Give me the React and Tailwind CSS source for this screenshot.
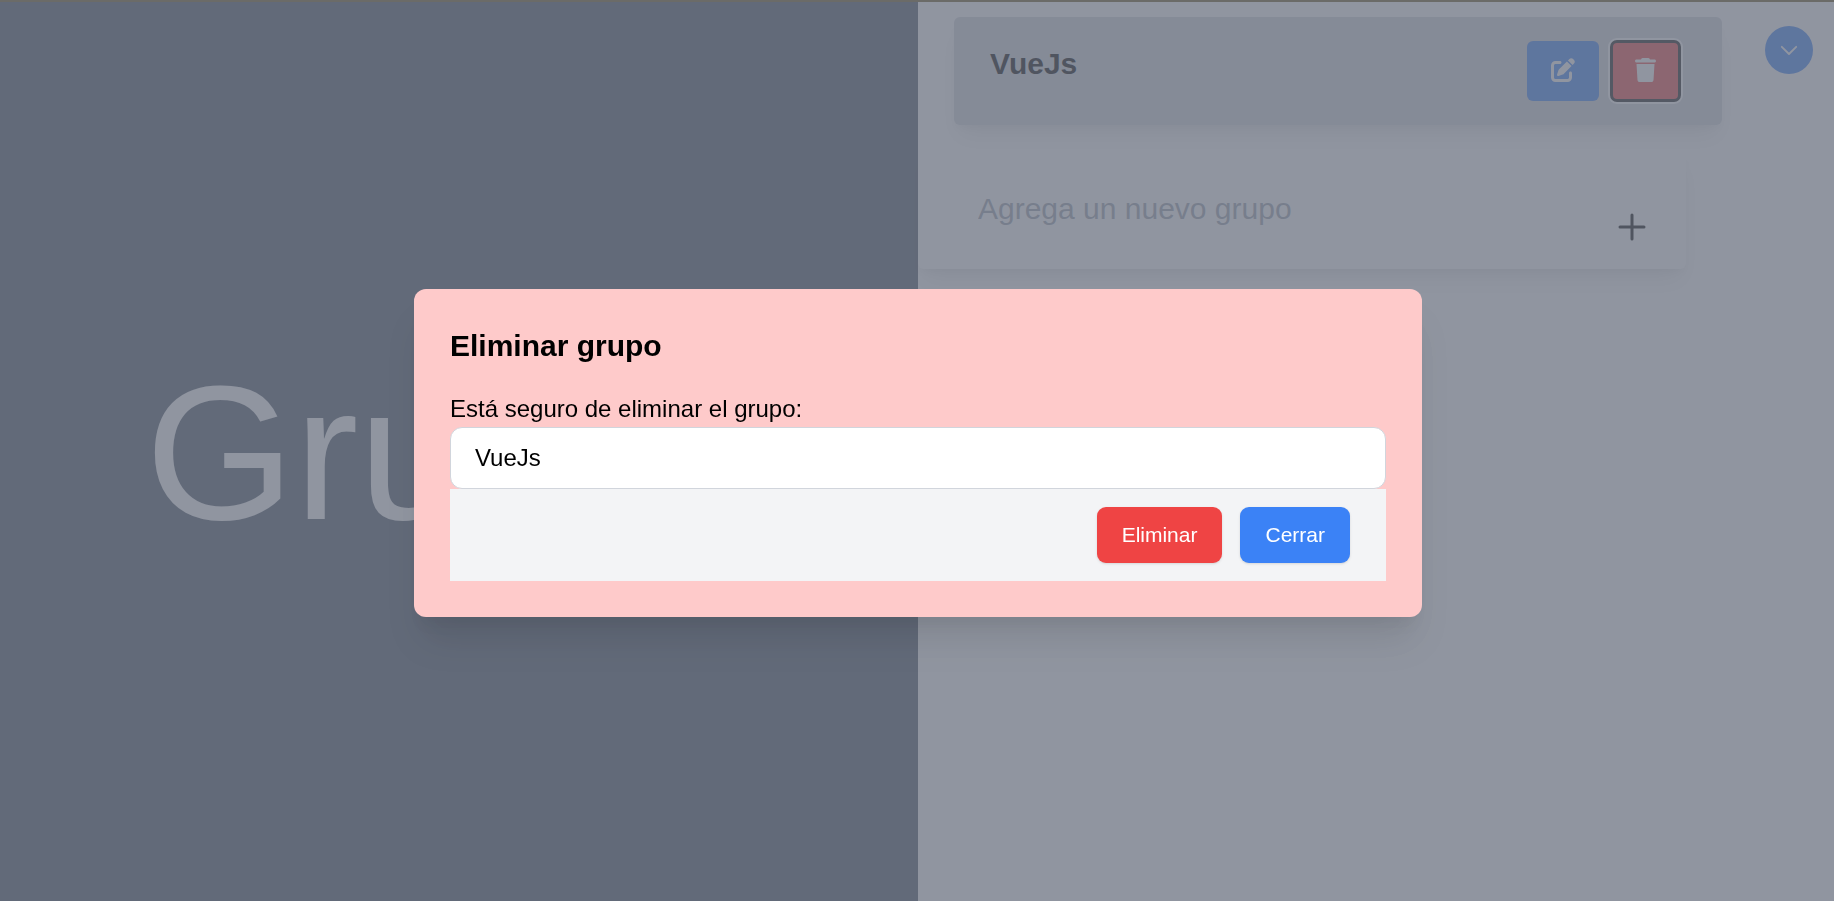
import { FaPenToSquare, FaTrash } from "react-icons/fa6";

function Plus() {
  return (
    <svg viewBox="0 0 36 36" className="size-9" fill="none" stroke="currentColor" strokeWidth="3" strokeLinecap="round" aria-hidden="true">
      <path d="M18 6v24M6 18h24" />
    </svg>
  );
}

function ChevronDown() {
  return (
    <svg viewBox="0 0 24 24" className="size-6" fill="none" stroke="currentColor" strokeWidth="1.8" strokeLinecap="round" strokeLinejoin="round" aria-hidden="true">
      <path d="M4.8 8.8l7.2 7.2 7.2-7.2" />
    </svg>
  );
}

function GroupsPage() {
  return (
    <div className="flex min-h-screen border-t-2 border-[#6b6b68] bg-gray-600 pl-0.5">
      <section className="flex w-1/2 items-center justify-center pt-0.5">
        <h1 className="text-[192px] leading-none text-white">Grupos</h1>
      </section>
      <main className="flex w-1/2 items-start justify-between bg-white">
        <div className="mr-[43px] flex-1">
          <article className="mt-[15px] ml-9 flex justify-between rounded-md bg-[#d1d5db] py-6 pr-[42px] pl-9 shadow-[0_15px_23px_-5px_rgb(0_0_0/0.1),0_6px_9px_-3px_rgb(0_0_0/0.05)]">
            <h2 className="text-[30px] leading-[46px] font-bold">VueJs</h2>
            <div className="flex gap-3">
              <button type="button" aria-label="Editar" className="flex h-[60px] items-center justify-center rounded-md bg-[#3b82f6] px-6 pb-0.5 text-white">
                <FaPenToSquare className="size-6" />
              </button>
              <button type="button" aria-label="Borrar" className="flex h-[60px] items-center justify-center rounded-md bg-[#ef4444] px-6 pb-0.5 text-white shadow-[0_0_0_3px_white] outline-3 -outline-offset-2 outline-[#101010]">
                <FaTrash className="h-6 w-[21px]" />
              </button>
            </div>
          </article>
          <form className="mt-6 mr-9 flex rounded-md bg-white px-9 shadow-[0_15px_23px_-5px_rgb(0_0_0/0.1),0_6px_9px_-3px_rgb(0_0_0/0.05)]">
            <input aria-label="Nuevo grupo" placeholder="Agrega un nuevo grupo" className="mt-[30px] mb-[30px] h-[60px] flex-1 px-6 text-[30px] placeholder:text-[#9ca3af]" />
            <button type="button" aria-label="Agregar" className="mt-[60px] size-9"><Plus /></button>
          </form>
        </div>
        <button type="button" aria-label="Opciones" className="mt-6 mr-[21px] flex size-12 items-center justify-center rounded-full bg-[#3b82f6] text-white">
          <ChevronDown />
        </button>
      </main>
    </div>
  );
}

function DeleteDialog() {
  return (
    <div className="fixed inset-0 top-[2px] flex items-center justify-center bg-[#6b7280]/75 pt-0.5 pl-0.5">
      <div role="dialog" aria-modal="true" aria-labelledby="dialog-title" className="w-full max-w-[1008px] rounded-xl bg-[#fecaca] p-9 shadow-[0_30px_38px_-8px_rgb(0_0_0/0.1),0_15px_15px_-8px_rgb(0_0_0/0.05)]">
        <h2 id="dialog-title" className="text-[30px] leading-[42px] font-bold">Eliminar grupo</h2>
        <label htmlFor="group-name" className="mt-6 block text-2xl leading-9">Está seguro de eliminar el grupo:</label>
        <input id="group-name" readOnly defaultValue="VueJs" className="block h-[62px] w-full rounded-xl border border-gray-300 bg-white px-6 text-2xl" />
        <div className="flex justify-end gap-[18px] bg-gray-100 px-9 py-[18px]">
          <button type="button" className="h-14 rounded-[9px] bg-[#ef4444] px-[25px] text-[21px] text-white shadow-sm">Eliminar</button>
          <button type="button" className="h-14 rounded-[9px] bg-[#3b82f6] px-[25px] text-[21px] text-white shadow-sm">Cerrar</button>
        </div>
      </div>
    </div>
  );
}

export default function App() {
  return (
    <div className="font-['Liberation_Sans',Arial,sans-serif] text-black">
      <GroupsPage />
      <DeleteDialog />
    </div>
  );
}
